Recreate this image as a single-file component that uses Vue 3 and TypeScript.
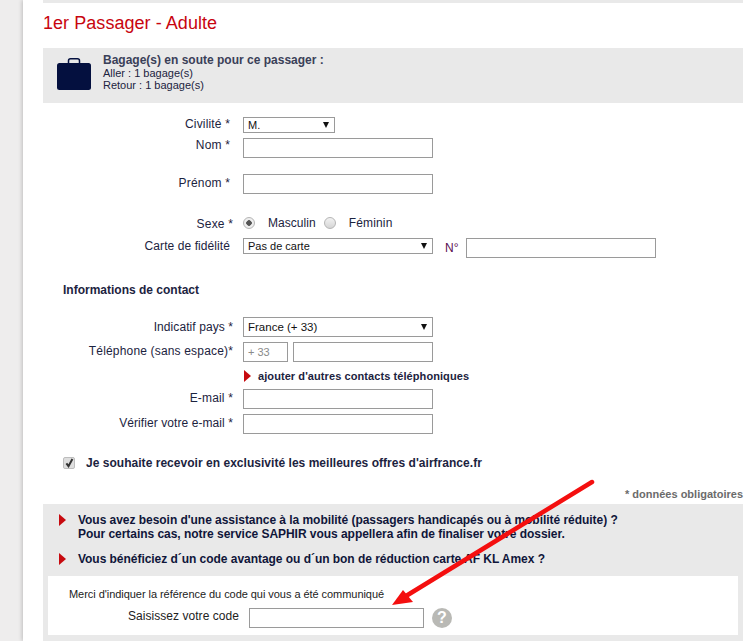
<script setup lang="ts">
const title = '1er Passager - Adulte'
</script>

<template>
  <div class="page">
    <main class="sheet">
      <div class="topbar"></div>
      <h1 class="title">{{ title }}</h1>
      <section class="luggage">
        <svg class="bag" width="34" height="32" viewBox="0 0 34 32" aria-hidden="true">
          <path d="M11.5 6V2.8C11.5 1.6 12.3.8 13.5.8h7c1.2 0 2 .8 2 2V6" fill="none" stroke="#04103f" stroke-width="1.5"/>
          <rect x="0" y="5" width="34" height="27" rx="2.5" fill="#04103f"/>
        </svg>
        <div class="luggage-text">
          <div class="luggage-head">Bagage(s) en soute pour ce passager :</div>
          <div>Aller : 1 bagage(s)</div>
          <div>Retour : 1 bagage(s)</div>
        </div>
      </section>

      <div class="form">
        <div class="row r-civ">
          <label class="lab">Civilité *</label>
          <div class="sel sel-s"><span>M.</span><i class="caret"></i></div>
        </div>
        <div class="row r-nom">
          <label class="lab">Nom *</label>
          <div class="inp w190"></div>
        </div>
        <div class="row r-pre">
          <label class="lab">Prénom *</label>
          <div class="inp w190"></div>
        </div>
        <div class="row r-sex">
          <label class="lab far">Sexe *</label>
          <span class="radio on"></span><span class="opt o1">Masculin</span>
          <span class="radio"></span><span class="opt o2">Féminin</span>
        </div>
        <div class="row r-fid">
          <label class="lab tight">Carte de fidélité</label>
          <div class="sel sel-m"><span>Pas de carte</span><i class="caret"></i></div>
          <span class="num">N°</span>
          <div class="inp w190"></div>
        </div>

        <h2 class="contact">Informations de contact</h2>

        <div class="row r-ind">
          <label class="lab far tight">Indicatif pays *</label>
          <div class="sel sel-l"><span>France (+ 33)</span><i class="caret"></i></div>
        </div>
        <div class="row r-tel">
          <label class="lab far">Téléphone (sans espace)*</label>
          <div class="inp w45 prefix">+ 33</div>
          <div class="inp w140"></div>
        </div>
        <div class="add">
          <i class="tri"></i><span>ajouter d'autres contacts téléphoniques</span>
        </div>
        <div class="row r-mail">
          <label class="lab far">E-mail *</label>
          <div class="inp w190"></div>
        </div>
        <div class="row r-ver">
          <label class="lab far tight">Vérifier votre e-mail *</label>
          <div class="inp w190"></div>
        </div>

        <div class="optin">
          <span class="check">
            <svg width="9" height="10" viewBox="0 0 9 10" aria-hidden="true"><path d="M1.4 5.4 3.5 8.2 7.4 1" fill="none" stroke="#333" stroke-width="2"/></svg>
          </span>
          <span>Je souhaite recevoir en exclusivité les meilleures offres d'airfrance.fr</span>
        </div>
      </div>

      <p class="req">* données obligatoires</p>

      <section class="extras">
        <div class="line l1">
          <i class="tri"></i>
          <div>Vous avez besoin d'une assistance à la mobilité (passagers handicapés ou à mobilité réduite) ?<br>Pour certains cas, notre service SAPHIR vous appellera afin de finaliser votre dossier.</div>
        </div>
        <div class="line l2">
          <i class="tri"></i>
          <div>Vous bénéficiez d´un code avantage ou d´un bon de réduction carte AF KL Amex ?</div>
        </div>
        <div class="code">
          <div class="code-note">Merci d'indiquer la référence du code qui vous a été communiqué</div>
          <div class="code-row">
            <label class="code-lab">Saisissez votre code</label>
            <div class="inp w175"></div>
            <span class="help">?</span>
          </div>
        </div>
      </section>

      <svg class="arrow" width="220" height="130" viewBox="0 0 220 130" aria-hidden="true">
        <path d="M203 4 17 118" fill="none" stroke="#f40f0f" stroke-width="4.5" stroke-linecap="round"/>
        <path d="M3 127 14 112 24 124Z" fill="#f40f0f"/>
      </svg>
    </main>
  </div>
</template>

<style>
html, body { margin: 0; background: #fff; }
</style>

<style scoped>
.page {
  width: 751px;
  height: 641px;
  overflow: hidden;
  background: #eeeded;
  font-family: "Liberation Sans", Arial, sans-serif;
  color: #1c2340;
}
.sheet {
  position: relative;
  margin-left: 23px;
  height: 641px;
  box-sizing: border-box;
  padding: 0 8px 0 20px;
  background: #fff;
  box-shadow: -1px 0 4px rgba(0, 0, 0, 0.2);
}
.topbar { height: 3px; background: #e9e9e9; }
.title {
  margin: 10px 0 0;
  font-size: 18px;
  line-height: 21px;
  font-weight: 400;
  letter-spacing: 0.05px;
  color: #c8050f;
}
.luggage {
  display: flex;
  margin-top: 14px;
  height: 55px;
  background: #e9e9e9;
}
.bag { margin: 10px 0 0 14px; }
.luggage-text {
  margin: 5px 0 0 12px;
  font-size: 11px;
  line-height: 12px;
}
.luggage-head { font-size: 12px; font-weight: 700; line-height: 14px; color: #3a4058; }
.form { position: relative; }
.row { display: flex; align-items: flex-start; }
.lab {
  width: 187px;
  flex: none;
  margin-right: 13px;
  text-align: right;
  font-size: 12px;
  line-height: 14px;
  letter-spacing: 0.17px;
  white-space: nowrap;
}
.lab.far { width: 190px; margin-right: 10px; }
.lab.tight { letter-spacing: 0.08px; }
.inp, .sel {
  box-sizing: border-box;
  flex: none;
  border: 1px solid #9a9a9a;
  background: #fff;
}
.inp { height: 20px; }
.w190 { width: 190px; }
.w175 { width: 175px; }
.w45 { width: 45px; }
.w140 { width: 140px; margin-left: 5px; }
.prefix { padding-left: 4px; font-size: 11px; line-height: 19px; color: #8a8a8a; }
.sel {
  display: flex;
  align-items: center;
  justify-content: space-between;
  padding: 0 5px 0 4px;
  font-size: 11px;
  color: #111;
}
.sel-s { width: 92px; height: 16px; }
.sel-m { width: 190px; height: 16px; }
.sel-l { width: 190px; height: 20px; font-size: 11.5px; }
.caret {
  width: 0;
  height: 0;
  border-left: 3px solid transparent;
  border-right: 3px solid transparent;
  border-top: 6px solid #111;
}
.r-civ { margin-top: 14px; }
.r-nom { margin-top: 5px; }
.r-pre { margin-top: 16px; }
.r-pre .lab { margin-top: 2px; }
.r-sex { margin-top: 21px; height: 16px; align-items: center; }
.r-sex .lab { margin-top: 2px; }
.radio {
  flex: none;
  box-sizing: border-box;
  width: 12px;
  height: 12px;
  border: 1px solid #b5b5b5;
  border-radius: 50%;
  background: linear-gradient(#f2f2f2, #d5d5d5);
}
.radio.on { background: radial-gradient(circle, #555 0 2.5px, #eee 3px); }
.opt { font-size: 12px; letter-spacing: 0.05px; }
.o1 { margin: 0 8px 0 13px; }
.o2 { margin-left: 13px; letter-spacing: 0.15px; }
.r-fid { margin-top: 7px; }
.r-fid .lab { margin-top: 1px; }
.num { margin: 3px 8px 0 12px; font-size: 12px; color: #5a0f50; }
.contact {
  margin: 25px 0 0 20px;
  font-size: 12px;
  line-height: 14px;
  font-weight: 700;
}
.r-ind { margin-top: 20px; }
.r-ind .lab { margin-top: 3px; }
.r-tel .lab, .r-mail .lab, .r-ver .lab { margin-top: 2px; }
.r-tel { margin-top: 5px; }
.add {
  display: flex;
  align-items: center;
  margin: 7px 0 0 201px;
  height: 13px;
  font-size: 11px;
  font-weight: 700;
  letter-spacing: 0.08px;
}
.tri {
  flex: none;
  width: 0;
  height: 0;
  border-top: 6px solid transparent;
  border-bottom: 6px solid transparent;
  border-left: 7px solid #c70a0f;
}
.add .tri { margin-right: 7px; }
.r-mail { margin-top: 7px; }
.r-ver { margin-top: 5px; }
.optin {
  display: flex;
  align-items: center;
  margin: 22px 0 0 20px;
  font-size: 12px;
  font-weight: 700;
  letter-spacing: 0.03px;
}
.check {
  box-sizing: border-box;
  display: flex;
  align-items: center;
  justify-content: center;
  width: 12px;
  height: 12px;
  margin-right: 11px;
  border: 1px solid #bdbdbd;
  border-radius: 2px;
  background: #dedede;
}
.req {
  margin: 18px 0 0;
  text-align: right;
  font-size: 11px;
  line-height: 13px;
  font-weight: 700;
  color: #6b6b6b;
}
.extras {
  margin-top: 3px;
  height: 150px;
  padding: 9px 5px 0;
  box-sizing: border-box;
  background: #e9e9e9;
  font-size: 12px;
  line-height: 14px;
  font-weight: 700;
  letter-spacing: -0.04px;
  color: #10163a;
}
.line { display: flex; align-items: flex-start; padding-left: 11px; }
.line .tri { margin: 1px 12px 0 0; }
.l2 { margin-top: 11px; }
.code {
  margin-top: 10px;
  height: 59px;
  box-sizing: border-box;
  padding-top: 12px;
  background: #fff;
  font-weight: 400;
  letter-spacing: 0;
  color: #222;
}
.code-note { padding-left: 21px; font-size: 11px; line-height: 13px; letter-spacing: -0.05px; }
.code-row { display: flex; align-items: center; margin-top: 7px; }
.code-lab { width: 191px; text-align: right; margin: 0 10px 5px 0; font-size: 12px; letter-spacing: 0.05px; }
.help {
  display: flex;
  align-items: center;
  justify-content: center;
  width: 20px;
  height: 20px;
  margin-left: 8px;
  border-radius: 50%;
  background: #b9b9b5;
  color: #fff;
  font-size: 16px;
  font-weight: 700;
}
.arrow {
  position: absolute;
  left: 366px;
  top: 478px;
  pointer-events: none;
}
</style>
